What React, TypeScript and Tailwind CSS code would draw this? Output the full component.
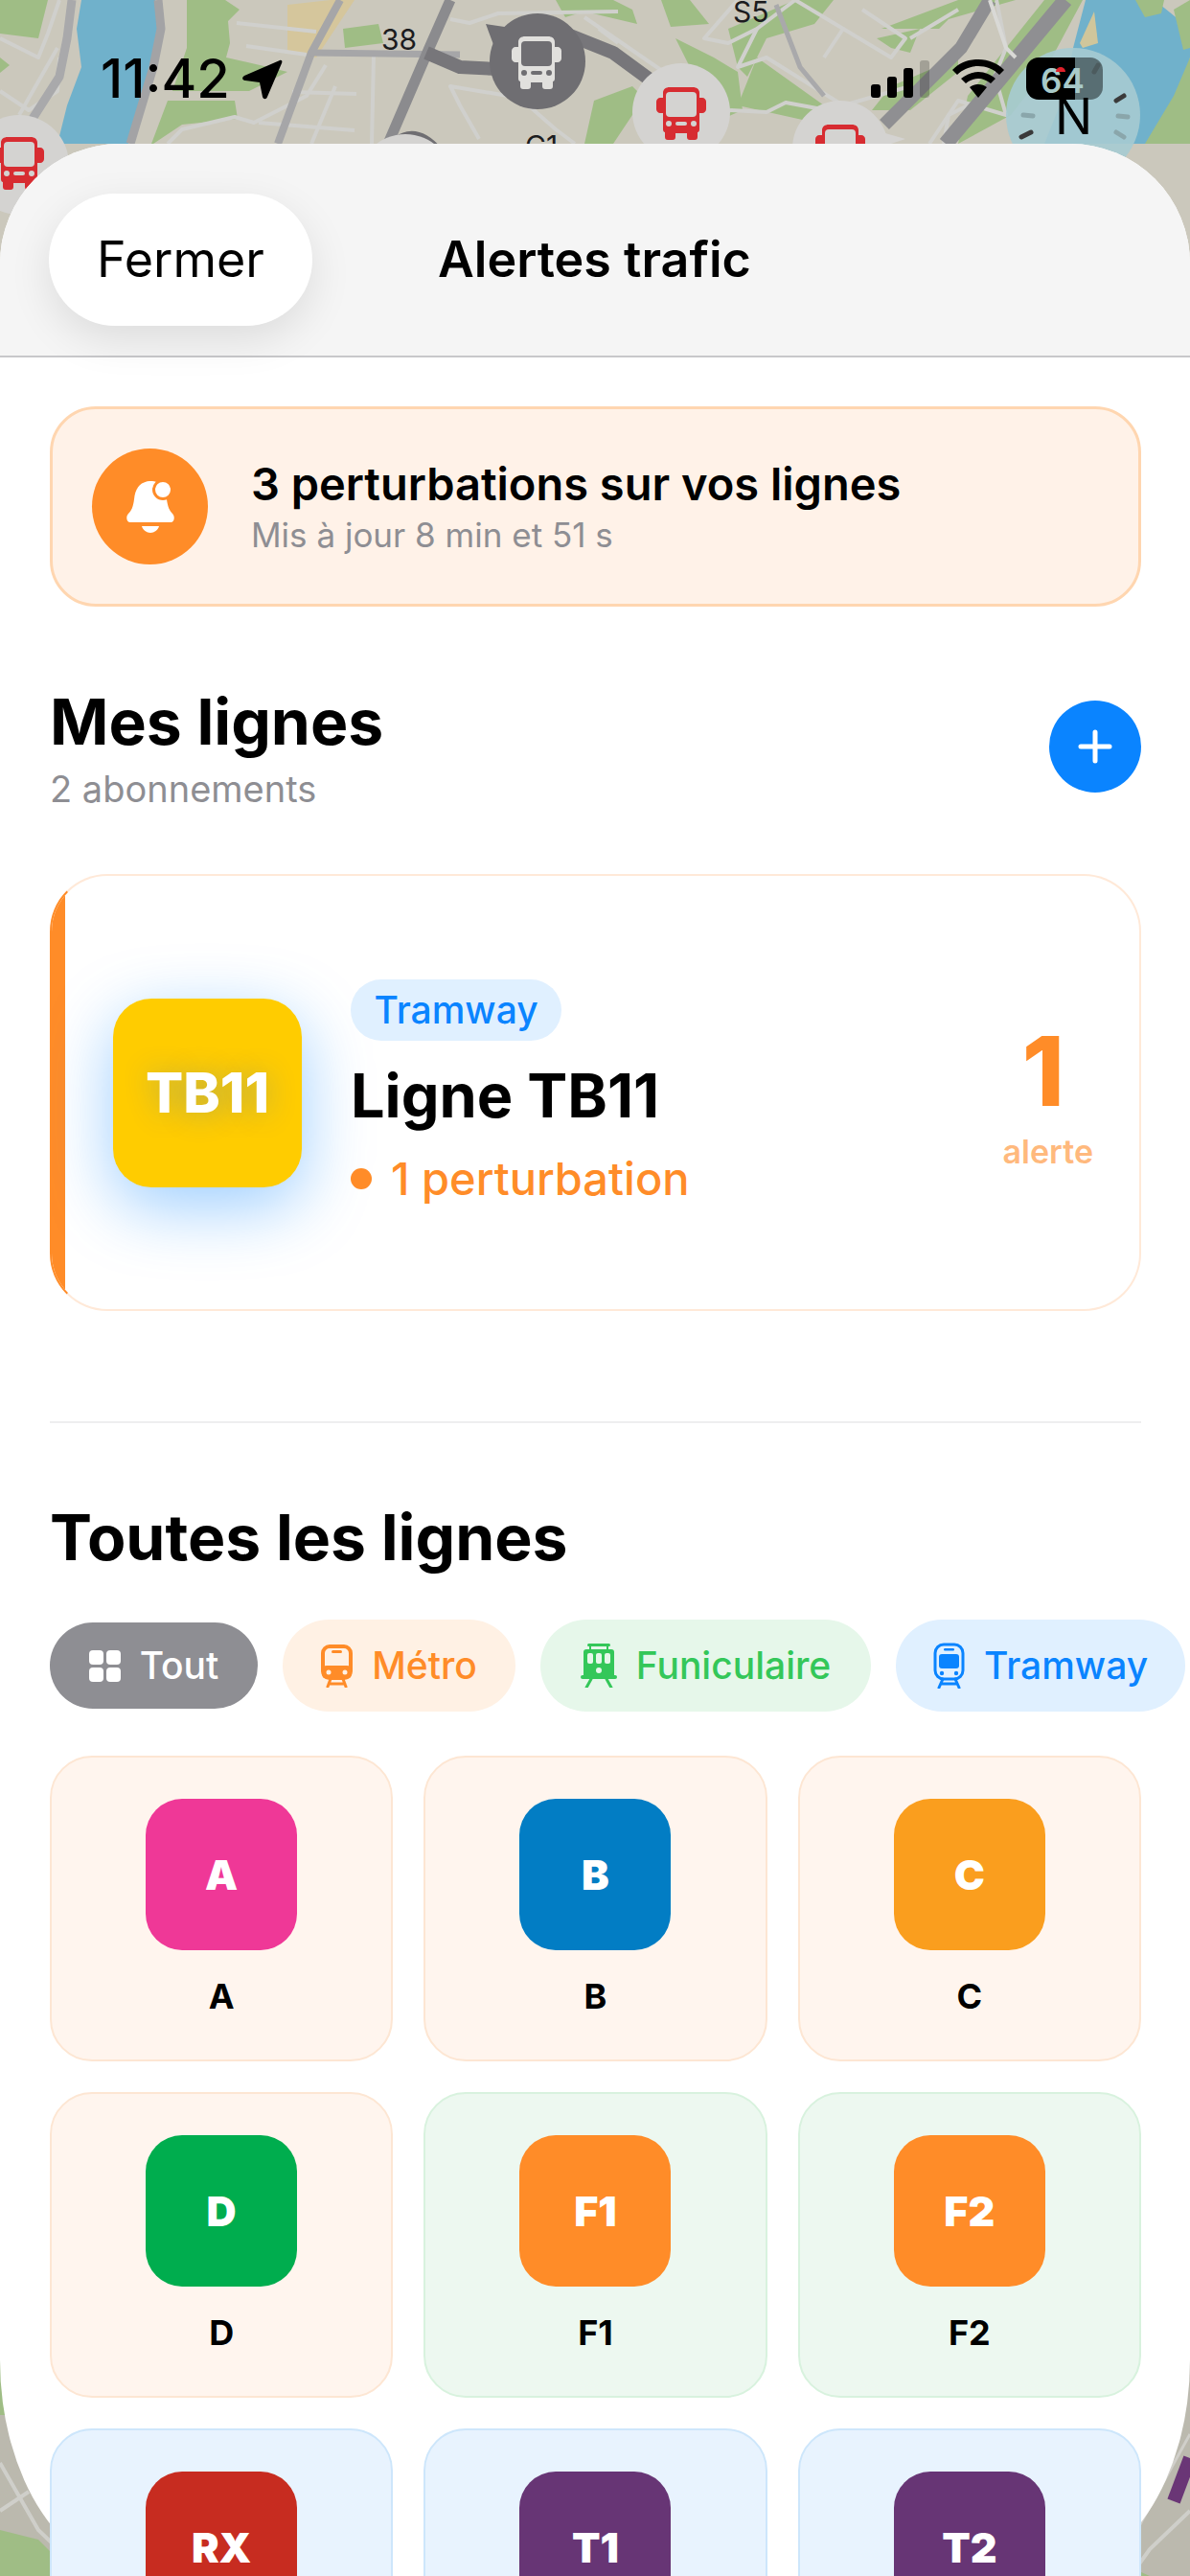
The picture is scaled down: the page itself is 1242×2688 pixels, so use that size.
import type { ReactNode } from "react";

const FONT = "font-['Inter','Liberation_Sans',sans-serif]";

function BusIcon({ color, glass, className }: { color: string; glass: string; className?: string }) {
  return (
    <svg viewBox="0 0 52 56" className={className}>
      <path
        fill={color}
        d="M14 1h24c4 0 7 2 7 6v5h3c2 0 4 2 4 4v8c0 2-2 4-4 4h-3v17c0 2-1 3-2 3v5c0 2-1 3-3 3h-5c-2 0-3-1-3-3v-4H20v4c0 2-1 3-3 3h-5c-2 0-3-1-3-3v-5c-1 0-2-1-2-3V28H4c-2 0-4-2-4-4v-8c0-2 2-4 4-4h3V7c0-4 3-6 7-6z"
      />
      <rect x="10" y="6" width="32" height="26" rx="4" fill={glass} />
      <circle cx="13" cy="39" r="3" fill={glass} />
      <circle cx="39" cy="39" r="3" fill={glass} />
      <rect x="20" y="37" width="12" height="4" rx="2" fill={glass} />
    </svg>
  );
}

function MapLayer() {
  const roads = [
    "M0 40 L40 60 L50 35 L62 0",
    "M0 95 L30 115 L60 95 L62 60",
    "M20 120 L60 50",
    "M247 24 L330 33",
    "M257 48 L320 57",
    "M175 150 L190 135 L245 122 L265 128 L320 100 L340 68",
    "M305 96 L372 98",
    "M270 128 L370 136",
    "M325 150 L350 90",
    "M390 58 L388 150",
    "M470 20 L490 24 L520 14 L645 12",
    "M500 145 L480 110 L470 90 L530 100",
    "M540 100 L580 135 L600 150",
    "M610 18 L700 80",
    "M625 30 L645 45",
    "M770 0 L735 40 L760 45 L790 30 L830 0",
    "M790 30 L770 70 L800 60 L880 110 L950 90",
    "M760 115 L800 117 L820 107 L880 118",
    "M860 60 L880 30 L830 0",
    "M880 30 L930 60 L945 40 L900 10",
    "M950 40 L1000 10",
    "M985 150 L990 120 L1030 100 L1050 50 L1040 0",
    "M970 150 L1000 105 L1050 120 L1040 85",
  ];
  const greens = [
    "M195 0 L235 0 L250 10 L238 22 L240 45 L236 60 L280 70 L300 75 L260 95 L180 95 L195 50Z",
    "M175 105 L245 105 L248 124 L190 130 L160 150 L158 150Z",
    "M0 0 L50 0 L40 40 L0 35Z",
    "M0 60 L10 68 L0 76Z",
    "M358 30 L395 25 L400 45 L360 50Z",
    "M580 0 L640 0 L660 10 L665 25 L610 12 L590 18Z",
    "M690 0 L720 0 L740 25 L700 28Z",
    "M705 40 L725 50 L745 60 L770 75 L775 115 L740 130 L700 105 L740 110Z",
    "M620 105 L660 90 L680 110 L660 120 L640 150 L610 150Z",
    "M760 30 L830 0 L870 0 L850 25 L800 40 L780 80 L770 70Z",
    "M790 60 L860 110 L860 130 L770 110Z",
    "M920 30 L980 30 L990 20 L1060 0 L1000 0Z",
    "M915 40 L960 30 L950 55 L930 50Z",
    "M930 90 L1000 60 L1000 75 L950 115 L910 115Z",
    "M1010 100 L1090 0 L1130 0 L1090 75 L1055 120 L1000 150Z",
    "M1185 0 L1215 0 L1212 14 L1195 18Z",
    "M1225 10 L1242 0 L1242 50 L1235 52Z",
    "M1195 150 L1225 100 L1242 60 L1242 150Z",
    "M0 2640 L40 2650 L70 2680 L70 2688 L0 2688Z",
    "M0 2440 L8 2440 L8 2520 L0 2520Z",
    "M1160 2670 L1200 2688 L1150 2688Z",
  ];
  return (
    <svg className="absolute inset-0" width="1242" height="2688" viewBox="0 0 1242 2688">
      <rect width="1242" height="300" fill="#cbc8bc" />
      <rect y="2300" width="1242" height="388" fill="#bbb9ae" />
      <path d="M85 0 L162 0 L166 30 L160 70 L142 130 L134 150 L60 150 L70 110 L85 70 L80 30Z" fill="#70b1cb" />
      <path d="M1133 0 L1120 50 L1110 100 L1090 150 L1225 150 L1242 60 L1242 30 L1205 0Z" fill="#70b1cb" />
      <path d="M300 5 L345 0 L370 0 L330 60 L300 55Z" fill="#d5c69c" />
      <path d="M1127 45 L1142 12 L1146 45 L1130 50Z" fill="#d0c69b" />
      {greens.map((d) => (
        <path key={d} d={d} fill="#9fbd85" />
      ))}
      {roads.map((d) => (
        <path key={d} d={d} fill="none" stroke="#d0d0cd" strokeWidth="4" strokeLinejoin="round" />
      ))}
      <path d="M75 0 L70 40 L62 80 L30 130" fill="none" stroke="#a9a9ab" strokeWidth="9" strokeLinejoin="round" />
      <path d="M165 0 L168 30 L160 70 L136 150" fill="none" stroke="#a3a3a5" strokeWidth="9" strokeLinejoin="round" />
      <path d="M355 0 L325 55 L290 150" fill="none" stroke="#a6a6a8" strokeWidth="8" strokeLinejoin="round" />
      <path d="M325 55 L480 57" fill="none" stroke="#a6a6a8" strokeWidth="7" />
      <path d="M470 0 L448 50 L405 150" fill="none" stroke="#8b8b8e" strokeWidth="11" strokeLinejoin="round" />
      <path d="M1033 0 L1003 50 L923 130" fill="none" stroke="#8f8f92" strokeWidth="14" />
      <path d="M1112 0 L987 150" fill="none" stroke="#8f8f92" strokeWidth="16" />
      <path d="M1033 0 L1050 50 L1060 60" fill="none" stroke="#d9d9d6" strokeWidth="4" />
      <path d="M810 5 L835 70 L860 100" fill="none" stroke="#a9a9ab" strokeWidth="5" />
      <path d="M445 55 L480 70 L520 72" fill="none" stroke="#77767a" strokeWidth="14" strokeLinejoin="round" />
      <path d="M590 35 L640 55 L685 88" fill="none" stroke="#77767a" strokeWidth="14" strokeLinejoin="round" />
      <path d="M400 170 Q425 125 455 160" fill="none" stroke="#6f6e72" strokeWidth="16" />
      <path d="M1160 2688 L1242 2540" fill="none" stroke="#d0cfca" strokeWidth="3" />
      <path d="M1225 2610 L1242 2565" fill="none" stroke="#6a3676" strokeWidth="14" />
      <path d="M0 2570 L40 2640 L90 2688 M0 2620 L30 2600 M100 2650 L90 2688" fill="none" stroke="#cfcfca" strokeWidth="4" />
      <path d="M1242 2620 L1200 2660 L1180 2688" fill="none" stroke="#cfcfca" strokeWidth="4" />
      <path d="M507 25 L540 30 L520 60Z" fill="#6f6e72" />
      <circle cx="561" cy="64" r="50" fill="#6f6e72" />
      <circle cx="423" cy="190" r="50" fill="#d4d3d1" />
      <circle cx="20" cy="172" r="52" fill="#d4d3d1" />
      <circle cx="711" cy="117" r="51" fill="#d4d3d1" />
      <circle cx="877" cy="155" r="50" fill="#d4d3d1" />
      <path d="M835 150 L910 135 L945 145 L900 160Z" fill="#d4d3d1" />
      <circle cx="1120" cy="120" r="70" fill="#a6cbd2" opacity="0.9" />
      <g stroke="#3a3a3a" strokeWidth="5" strokeLinecap="round">
        <path d="M1165 105 L1173 100" />
        <path d="M1066 143 L1076 138" />
      </g>
      <g stroke="#8aa6ab" strokeWidth="5" strokeLinecap="round">
        <path d="M1068 120 L1078 121" />
        <path d="M1167 121 L1177 122" />
        <path d="M1165 138 L1173 143" />
        <path d="M1142 75 L1146 68" />
      </g>
    </svg>
  );
}

function StatusBar() {
  return (
    <>
      <div className={`absolute left-[105px] top-[50px] text-[56px] leading-[64px] font-medium text-black ${FONT}`}>11:42</div>
      <svg className="absolute left-[252px] top-[62px]" width="43" height="43" viewBox="0 0 43 43">
        <path d="M40 1 L3 17 C0 19 1 22 4 22 L19 24 L22 39 C23 42 26 42 27 39 L42 4 C43 2 42 0 40 1Z" fill="#000" />
      </svg>
      <div className="absolute left-[909px] top-[63px] flex items-end gap-[7px]">
        <div className="h-[14px] w-[10px] rounded-[3px] bg-black" />
        <div className="h-[22px] w-[10px] rounded-[3px] bg-black" />
        <div className="h-[31px] w-[10px] rounded-[3px] bg-black" />
        <div className="h-[39px] w-[10px] rounded-[3px] bg-black/20" />
      </div>
      <svg className="absolute left-[994px] top-[62px]" width="54" height="40" viewBox="0 0 54 40">
        <path d="M27 0C16 0 7 4 0 11l5 5C11 10 19 7 27 7s16 3 22 9l5-5C47 4 38 0 27 0z" fill="#000" />
        <path d="M27 13c-7 0-13 3-18 7l5 5c4-3 8-5 13-5s9 2 13 5l5-5c-5-4-11-7-18-7z" fill="#000" />
        <path d="M27 26c-4 0-6 1-9 3l9 11 9-11c-3-2-5-3-9-3z" fill="#000" />
      </svg>
      <div className="absolute left-[1071px] top-[60px] flex h-[44px] w-[80px] overflow-hidden rounded-[13px]">
        <div className="w-[51px] bg-black" />
        <div className="flex-1 bg-black/45" />
      </div>
      <div className={`absolute left-[1086px] top-[66px] text-[35px] leading-[36px] font-semibold text-[#a9cac9] ${FONT}`}>64</div>
      <div className="absolute left-[1102px] top-[70px] h-[5px] w-[10px] rounded-t-full bg-[#e0202a]" />
      <div className={`absolute left-[1101px] top-[94px] text-[52px] leading-[56px] font-normal text-black ${FONT}`}>N</div>
      <span className={`absolute left-[398px] top-[23px] text-[30px] leading-[36px] text-[#1c1c1e] ${FONT}`}>38</span>
      <span className={`absolute left-[765px] top-[-6px] text-[30px] leading-[36px] text-[#1c1c1e] ${FONT}`}>S5</span>
      <span className={`absolute left-[548px] top-[134px] text-[30px] leading-[36px] text-[#1c1c1e] ${FONT}`}>C1</span>
      <BusIcon color="#e1e0dd" glass="#6f6e72" className="absolute left-[534px] top-[37px] h-[56px] w-[52px]" />
      <BusIcon color="#d72c31" glass="#d4d3d1" className="absolute left-[685px] top-[90px] h-[56px] w-[52px]" />
      <BusIcon color="#d72c31" glass="#d4d3d1" className="absolute left-[-6px] top-[142px] h-[56px] w-[52px]" />
      <BusIcon color="#d72c31" glass="#d4d3d1" className="absolute left-[851px] top-[129px] h-[56px] w-[52px]" />
    </>
  );
}

function GridIcon() {
  return (
    <svg width="33" height="33" viewBox="0 0 33 33" fill="#fff">
      <rect width="15" height="15" rx="4" />
      <rect x="18" width="15" height="15" rx="4" />
      <rect y="18" width="15" height="15" rx="4" />
      <rect x="18" y="18" width="15" height="15" rx="4" />
    </svg>
  );
}

function MetroIcon() {
  return (
    <svg width="33" height="45" viewBox="0 0 33 45">
      <rect x="2" y="2" width="29" height="33" rx="7" fill="none" stroke="#ff8c28" strokeWidth="4" />
      <rect x="1" y="22" width="31" height="14" rx="5" fill="#ff8c28" />
      <rect x="11" y="6" width="11" height="3" rx="1.5" fill="#ff8c28" />
      <circle cx="8" cy="29" r="2.5" fill="#fff1e4" />
      <circle cx="25" cy="29" r="2.5" fill="#fff1e4" />
      <path d="M7 44 L10 36 M26 44 L23 36 M8 41 H25" stroke="#ff8c28" strokeWidth="3" strokeLinecap="round" />
    </svg>
  );
}

function FunicularIcon() {
  return (
    <svg width="38" height="46" viewBox="0 0 38 46">
      <rect x="7" y="0" width="24" height="3" rx="1.5" fill="#34c759" />
      <path d="M10 3v4M28 3v4" stroke="#34c759" strokeWidth="2" />
      <rect x="3" y="6" width="32" height="30" rx="3" fill="#34c759" />
      <rect x="0" y="33" width="38" height="4" rx="2" fill="#34c759" />
      <rect x="7" y="10" width="6" height="11" rx="2" fill="#e6f7ea" />
      <rect x="16" y="10" width="6" height="11" rx="2" fill="#e6f7ea" />
      <rect x="25" y="10" width="6" height="11" rx="2" fill="#e6f7ea" />
      <circle cx="19" cy="28" r="3" fill="#e6f7ea" />
      <path d="M11 37 L6 46 M27 37 L32 46" stroke="#34c759" strokeWidth="3" strokeLinecap="round" />
    </svg>
  );
}

function TramIcon() {
  return (
    <svg width="33" height="48" viewBox="0 0 33 48">
      <rect x="2" y="2" width="29" height="36" rx="9" fill="none" stroke="#0a84ff" strokeWidth="3" />
      <rect x="6" y="12" width="21" height="15" rx="3" fill="#0a84ff" />
      <rect x="11" y="6" width="11" height="2.5" rx="1.2" fill="#0a84ff" />
      <circle cx="9" cy="32" r="2.2" fill="#0a84ff" />
      <circle cx="24" cy="32" r="2.2" fill="#0a84ff" />
      <path d="M6 47 L10 38 M27 47 L23 38 M8 43 H25" stroke="#0a84ff" strokeWidth="3" strokeLinecap="round" />
    </svg>
  );
}

function Chip({ icon, label, className, textClass }: { icon: ReactNode; label: string; className: string; textClass: string }) {
  return (
    <div className={`flex shrink-0 items-center justify-center gap-[20px] rounded-full ${className}`}>
      {icon}
      <span className={`text-[39px] leading-[44px] font-medium ${textClass}`}>{label}</span>
    </div>
  );
}

const LINES = [
  { code: "A", color: "bg-[#ef3897]", tile: "border-[#fde6d3] bg-[#fff5ee]" },
  { code: "B", color: "bg-[#027dc4]", tile: "border-[#fde6d3] bg-[#fff5ee]" },
  { code: "C", color: "bg-[#fa9e1e]", tile: "border-[#fde6d3] bg-[#fff5ee]" },
  { code: "D", color: "bg-[#00ad4e]", tile: "border-[#fde6d3] bg-[#fff5ee]" },
  { code: "F1", color: "bg-[#ff8c28]", tile: "border-[#d8f2de] bg-[#edf8f0]" },
  { code: "F2", color: "bg-[#ff8c28]", tile: "border-[#d8f2de] bg-[#edf8f0]" },
  { code: "RX", color: "bg-[#c72c20]", tile: "border-[#cde6fb] bg-[#e8f3fe]" },
  { code: "T1", color: "bg-[#673575]", tile: "border-[#cde6fb] bg-[#e8f3fe]" },
  { code: "T2", color: "bg-[#673575]", tile: "border-[#cde6fb] bg-[#e8f3fe]" },
];

function LineTile({ code, color, tile }: { code: string; color: string; tile: string }) {
  return (
    <div className={`flex h-[319px] flex-col items-center rounded-[44px] border-2 pt-[43px] ${tile}`}>
      <div className={`flex h-[158px] w-[158px] items-center justify-center rounded-[38px] text-[43px] leading-none font-black text-white ${color}`}>
        {code}
      </div>
      <div className="mt-[26px] text-[36px] leading-[44px] font-bold text-black">{code}</div>
    </div>
  );
}

export default function App() {
  return (
    <div className={`relative h-[2688px] w-[1242px] overflow-hidden bg-[#cbc8bc] ${FONT}`}>
      <MapLayer />
      <StatusBar />

      <div className="absolute inset-x-0 top-[150px] h-[2538px] rounded-t-[125px] rounded-br-[150px_225px] rounded-bl-[150px_225px] bg-white">
        <header className="flex h-[223px] items-center gap-[131px] rounded-t-[125px] border-b-2 border-[#c8c8ca] bg-[#f5f5f5] pt-[20px] pl-[51px]">
          <button className="h-[138px] w-[275px] rounded-full bg-white text-[52px] leading-none font-normal text-black shadow-[0_14px_44px_rgba(0,0,0,0.1)]">
            Fermer
          </button>
          <h1 className="text-[52px] leading-none font-semibold text-black">Alertes trafic</h1>
        </header>

        <main className="pt-[51px] pr-[51px] pl-[52px]">
          <section className="flex h-[209px] items-center gap-[45px] rounded-[48px] border-[3px] border-[#ffd6b0] bg-[#fff2e8] pl-[41px]">
            <div className="flex h-[121px] w-[121px] shrink-0 items-center justify-center rounded-full bg-[#ff8c28]">
              <svg width="50" height="54" viewBox="0 0 50 54">
                <path d="M24 0C13 1 9 9 8 19c-1 8-3 12-6 15-3 3-2 9 2 9h42c4 0 5-6 2-9-3-3-5-7-6-15C41 9 35-1 24 0z" fill="#fff" />
                <path d="M16 47h18c-1 4-5 7-9 7s-8-3-9-7z" fill="#fff" />
                <circle cx="38" cy="9" r="9.5" fill="#fff" stroke="#ff8c28" strokeWidth="3" />
              </svg>
            </div>
            <div>
              <p className="text-[47px] leading-[54px] font-semibold text-black">3 perturbations sur vos lignes</p>
              <p className="mt-[5px] text-[35px] leading-[42px] text-[#8e8e93]">Mis à jour 8 min et 51 s</p>
            </div>
          </section>

          <section className="mt-[80px] flex items-start justify-between">
            <div>
              <h2 className="text-[66px] leading-[80px] font-bold text-black">Mes lignes</h2>
              <p className="mt-[8px] text-[38px] leading-[44px] text-[#8e8e93]">2 abonnements</p>
            </div>
            <button className="mt-[18px] flex h-[96px] w-[96px] items-center justify-center rounded-full bg-[#0a84ff]">
              <svg width="36" height="36" viewBox="0 0 36 36">
                <path d="M18 3v30M3 18h30" stroke="#fff" strokeWidth="5" strokeLinecap="round" />
              </svg>
            </button>
          </section>

          <article className="mt-[67px] flex h-[456px] items-stretch overflow-hidden rounded-[60px] border-2 border-[#ffe9d8] border-l-[#ff8c28] bg-white">
            <div className="w-[14px] shrink-0 bg-[#ff8c28]" />
            <div className="flex min-w-0 flex-1 items-center pr-[48px] pl-[50px]">
              <div className="flex h-[197px] w-[197px] shrink-0 items-center justify-center rounded-[40px] bg-[#ffcc00] text-[58px] leading-none font-extrabold text-white shadow-[0_20px_70px_rgba(10,132,255,0.4)] [text-shadow:0_2px_30px_rgba(10,100,255,0.3)]">
                TB11
              </div>
              <div className="ml-[51px] min-w-0 flex-1">
                <span className="inline-flex h-[64px] w-[220px] items-center justify-center rounded-full bg-[#e0f0ff] text-[39px] font-medium text-[#0a84ff]">
                  Tramway
                </span>
                <h3 className="mt-[21px] text-[63px] leading-[72px] font-bold text-black">Ligne TB11</h3>
                <div className="mt-[23px] flex items-center gap-[20px] text-[47px] leading-[56px] font-medium text-[#ff8c28]">
                  <span className="h-[22px] w-[22px] rounded-full bg-[#ff8c28]" />
                  1 perturbation
                </div>
              </div>
              <div className="flex flex-col items-center text-[#ff8c28]">
                <span className="mt-[10px] pr-[10px] text-[100px] leading-[100px] font-extrabold">1</span>
                <span className="mt-[14px] text-[34px] leading-[40px] font-semibold opacity-60">alerte</span>
              </div>
            </div>
          </article>

          <hr className="mt-[115px] border-t-2 border-[#eeeeef]" />

          <h2 className="mt-[79px] text-[66px] leading-[80px] font-bold text-black">Toutes les lignes</h2>

          <div className="mt-[46px] flex h-[96px] w-[1220px] items-center gap-[26px]">
            <Chip icon={<GridIcon />} label="Tout" className="h-[90px] w-[217px] bg-[#8e8e93]" textClass="text-white" />
            <Chip icon={<MetroIcon />} label="Métro" className="h-[96px] w-[243px] bg-[#fff1e4]" textClass="text-[#ff8c28]" />
            <Chip icon={<FunicularIcon />} label="Funiculaire" className="h-[96px] w-[345px] bg-[#e6f7ea]" textClass="text-[#34c759]" />
            <Chip icon={<TramIcon />} label="Tramway" className="h-[96px] w-[302px] bg-[#e0f0ff]" textClass="text-[#0a84ff]" />
          </div>

          <div className="mt-[46px] grid grid-cols-3 gap-x-[32px] gap-y-[32px]">
            {LINES.map((line) => (
              <LineTile key={line.code} {...line} />
            ))}
          </div>
        </main>
      </div>
    </div>
  );
}
